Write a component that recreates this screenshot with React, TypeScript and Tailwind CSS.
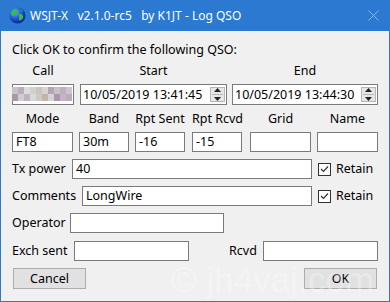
import React from 'react';

const Field: React.FC<{ w: string; h?: string; value?: string; className?: string }> = ({ w, h = 'h-[20px]', value, className = '' }) => (
  <div className={`${w} ${h} shrink-0 border border-[#7a7a7a] bg-white pl-[3px] text-[12.5px] leading-[18px] text-black ${className}`}>
    {value}
  </div>
);

const Spin: React.FC = () => (
  <div className="ml-auto mr-[1px] flex h-[15px] w-[15px] flex-col items-center justify-center border border-[#b5b5b5] bg-[#e6e6e6]">
    <svg width="7" height="4" viewBox="0 0 7 4" className="mb-[2px]">
      <path d="M3.5 0 L7 4 L0 4 Z" fill="#222" />
    </svg>
    <div className="h-px w-[11px] bg-[#b5b5b5]" />
    <svg width="7" height="4" viewBox="0 0 7 4" className="mt-[2px]">
      <path d="M0 0 L7 0 L3.5 4 Z" fill="#222" />
    </svg>
  </div>
);

const Check: React.FC = () => (
  <div className="flex h-[13px] w-[13px] shrink-0 items-center justify-center border border-[#333] bg-white">
    <svg width="9" height="8" viewBox="0 0 9 8">
      <path d="M1 4 L3.5 6.5 L8 1.5" fill="none" stroke="#333" strokeWidth="1.2" />
    </svg>
  </div>
);

const Globe: React.FC = () => (
  <svg width="17" height="17" viewBox="0 0 17 17">
    <defs>
      <radialGradient id="g" cx="0.35" cy="0.3" r="0.8">
        <stop offset="0" stopColor="#6aa8ff" />
        <stop offset="0.6" stopColor="#1846c8" />
        <stop offset="1" stopColor="#0a1f80" />
      </radialGradient>
    </defs>
    <circle cx="8.5" cy="8.5" r="8" fill="url(#g)" />
    <path d="M5 2.5 C7 2 9 3 8.5 5 C8 6.5 6 6 5.5 8 C5 10 3.5 9 2.5 7.5 C2 5.5 3 3.5 5 2.5 Z" fill="#2fc43a" />
    <path d="M10.5 7 C12.5 6.5 14.5 8 14 10.5 C13.5 12.5 11.5 14 10 13 C9.5 11.5 11 10.5 10 9 C9.5 8 9.8 7.3 10.5 7 Z" fill="#2fc43a" />
    <path d="M11 2.2 C12.5 2.6 13.5 3.5 14 4.5 C12.8 4.6 11.8 3.8 11 2.2 Z" fill="#2fc43a" />
  </svg>
);

const mosaic = [
  ['#c9c3c9', '#b9aeb9', '#dcdcdc', '#cfd0cf', '#c4c8c0', '#d8d2d0', '#b2a6b6', '#c9bfc9', '#bdb0bf', '#cdc4cd'],
  ['#a898a8', '#d0ccd0', '#bdb4bd', '#d9d9d9', '#cfc9c2', '#bfb5a8', '#d6d3d6', '#a997ae', '#c2b6c4', '#b8aeb8'],
];

export default function App() {
  return (
    <div className="relative h-[302px] w-[390px] overflow-hidden border-x border-b border-[#2b79d0] bg-[#f0f0f0] font-['Noto_Sans',sans-serif] text-[12.5px] text-black">
      {/* Title bar */}
      <div className="-mx-px flex h-[31px] items-center bg-[#2b79d0] pl-[9px] pr-[11px] text-white">
        <Globe />
        <span className="ml-[4px] whitespace-pre text-[12px] leading-[16px]">WSJT-X   v2.1.0-rc5   by K1JT - Log QSO</span>
        <svg width="11" height="11" viewBox="0 0 11 11" className="ml-auto">
          <path d="M0.5 0.5 L10.5 10.5 M10.5 0.5 L0.5 10.5" stroke="#8fb6e6" strokeWidth="1" />
        </svg>
      </div>

      <div className="flex flex-col pl-[11px]">
        <div className="mt-[11px] h-[16px] leading-[16px]">Click OK to confirm the following QSO:</div>

        {/* Call / Start / End */}
        <div className="mt-[5px] flex h-[16px] leading-[16px]">
          <div className="w-[62px] text-center">Call</div>
          <div className="ml-[6px] w-[147px] text-center">Start</div>
          <div className="ml-[5px] w-[146px] text-center">End</div>
        </div>
        <div className="mt-[5px] flex h-[21px]">
          <div className="relative h-[21px] w-[62px] border border-[#7a7a7a] bg-white">
            <div className="absolute left-[-1px] top-[2px] grid grid-cols-10">
              {mosaic.flat().map((c, i) => (
                <div key={i} className="h-[7px] w-[6px]" style={{ background: c }} />
              ))}
            </div>
          </div>
          <div className="ml-[6px] flex h-[21px] w-[147px] items-center border border-[#7a7a7a] bg-white pl-[2px] leading-[18px]">
            <span>10/05/2019 13:41:45</span>
            <Spin />
          </div>
          <div className="ml-[5px] flex h-[21px] w-[146px] items-center border border-[#7a7a7a] bg-white pl-[2px] leading-[18px]">
            <span>10/05/2019 13:44:30</span>
            <Spin />
          </div>
        </div>

        {/* Mode row */}
        <div className="mt-[6px] flex h-[16px] leading-[16px]">
          <div className="w-[61px] text-center">Mode</div>
          <div className="ml-[6px] w-[50px] text-center">Band</div>
          <div className="ml-[6px] w-[50px] text-center">Rpt Sent</div>
          <div className="ml-[7px] w-[50px] text-center whitespace-nowrap">Rpt Rcvd</div>
          <div className="ml-[8px] w-[61px] text-center">Grid</div>
          <div className="ml-[6px] w-[61px] text-center">Name</div>
        </div>
        <div className="mt-[5px] flex">
          <Field w="w-[61px]" value="FT8" />
          <Field w="w-[50px]" value="30m" className="ml-[6px]" />
          <Field w="w-[50px]" value="-16" className="ml-[6px]" />
          <Field w="w-[50px]" value="-15" className="ml-[7px]" />
          <Field w="w-[61px]" className="ml-[8px]" />
          <Field w="w-[61px]" className="ml-[6px]" />
        </div>

        {/* Tx power */}
        <div className="mt-[7px] flex h-[20px] items-center">
          <span className="w-[60px] leading-[16px]">Tx power</span>
          <Field w="w-[240px]" value="40" />
          <div className="ml-[6px]"><Check /></div>
          <span className="ml-[5px] leading-[16px]">Retain</span>
        </div>

        {/* Comments */}
        <div className="mt-[7px] flex h-[20px] items-center">
          <span className="w-[70px] leading-[16px]">Comments</span>
          <Field w="w-[230px]" value="LongWire" />
          <div className="ml-[6px]"><Check /></div>
          <span className="ml-[5px] leading-[16px]">Retain</span>
        </div>

        {/* Operator */}
        <div className="mt-[7px] flex h-[20px] items-center">
          <span className="w-[58px] leading-[16px]">Operator</span>
          <Field w="w-[154px]" />
        </div>

        {/* Exch sent / Rcvd */}
        <div className="mt-[8px] flex h-[20px] items-center">
          <span className="w-[62px] whitespace-nowrap leading-[16px]">Exch sent</span>
          <Field w="w-[115px]" />
          <span className="ml-[40px] w-[34px] leading-[16px]">Rcvd</span>
          <Field w="w-[115px]" />
        </div>

        {/* Buttons */}
        <div className="mt-[7px] flex h-[21px] pr-[12px]">
          <button className="ml-[1px] h-[21px] w-[73px] border border-[#adadad] bg-[#e1e1e1] text-[12.5px] leading-[18px]">Cancel</button>
          <button className="ml-auto h-[21px] w-[73px] border border-[#adadad] bg-[#e1e1e1] text-[12.5px] leading-[18px]">OK</button>
        </div>
      </div>

      {/* watermark */}
      <div className="pointer-events-none absolute left-[170px] top-[260px] whitespace-pre font-['Liberation_Sans',sans-serif] text-[35px] leading-[40px] text-white/30">
        © jh4vaj.com
      </div>
    </div>
  );
}
